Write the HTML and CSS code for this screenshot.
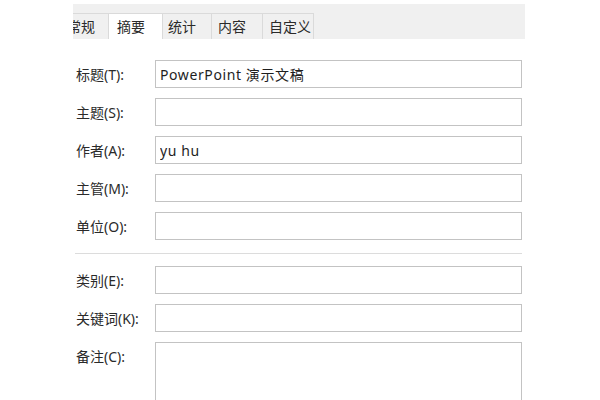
FILE: index.html
```html
<!DOCTYPE html>
<html lang="zh-CN">
<head>
<meta charset="utf-8">
<title>属性 - 摘要</title>
<link rel="stylesheet" href="styles.css">
</head>
<body>
<div class="dialog">
  <div class="tabstrip">
    <div class="tab tab-first">常规</div>
    <div class="tab tab-active">摘要</div>
    <div class="tab">统计</div>
    <div class="tab tab-w51">内容</div>
    <div class="tab tab-w52">自定义</div>
  </div>
  <div class="form">
    <div class="grid">
      <label class="lbl">标题(T):</label>
      <input class="field" type="text" value="PowerPoint 演示文稿">
      <label class="lbl">主题(S):</label>
      <input class="field" type="text" value="">
      <label class="lbl">作者(A):</label>
      <input class="field" type="text" value="yu hu">
      <label class="lbl">主管(M):</label>
      <input class="field" type="text" value="">
      <label class="lbl">单位(O):</label>
      <input class="field" type="text" value="">
    </div>
    <div class="sep"></div>
    <div class="grid grid-last">
      <label class="lbl">类别(E):</label>
      <input class="field" type="text" value="">
      <label class="lbl">关键词(K):</label>
      <input class="field" type="text" value="">
      <label class="lbl lbl-top">备注(C):</label>
      <textarea class="field area"></textarea>
    </div>
  </div>
</div>
</body>
</html>
```

FILE: styles.css
```css
html, body {
  margin: 0;
  padding: 0;
  background: #ffffff;
}

body {
  font-family: "Noto Sans", "Noto Sans CJK SC", sans-serif;
  font-size: 14px;
  color: #262626;
  overflow: hidden;
  height: 400px;
}

.dialog {
  margin-left: 73px;
  width: 452px;
  padding-top: 4px;
}

.tabstrip {
  height: 35px;
  background: #f0f0f0;
  display: flex;
  align-items: flex-end;
  overflow: hidden;
}

.tab {
  box-sizing: border-box;
  flex: 0 0 auto;
  width: 49px;
  height: 26px;
  line-height: 24px;
  padding-left: 5px;
  border-top: 1px solid #dadada;
  border-left: 1px solid #dadada;
  background: #f0f0f0;
  white-space: nowrap;
  font-family: "Noto Sans CJK SC", sans-serif;
  font-size: 14px;
  color: #2a2a2a;
}

.tab-first {
  margin-left: -12px;
}

.tab-active {
  position: relative;
  z-index: 1;
  width: 55px;
  margin-left: -2px;
  padding-left: 8px;
  background: #ffffff;
  border-right: 1px solid #dadada;
  margin-right: -1px;
}

.tab-w51 {
  width: 51px;
  padding-left: 6px;
}

.tab-w52 {
  width: 52px;
  padding-left: 6px;
  border-right: 1px solid #dadada;
}

.form {
  padding-top: 21px;
  width: 449px;
}

.grid {
  display: grid;
  grid-template-columns: 82px 367px;
  grid-auto-rows: 28px;
  row-gap: 10px;
}

.grid-last {
  grid-template-rows: 28px 28px 58px;
}

.lbl {
  align-self: center;
  padding-left: 3px;
  white-space: nowrap;
  color: #2a2a2a;
}

.lbl-top {
  align-self: start;
  padding-top: 4px;
}

.field {
  box-sizing: border-box;
  margin: 0;
  width: 367px;
  height: 28px;
  border: 1px solid #c3c3c3;
  background: #ffffff;
  padding: 0 4px;
  font-family: "Noto Sans", "Noto Sans CJK SC", sans-serif;
  font-size: 14px;
  letter-spacing: 0.6px;
  color: #1e1e1e;
  outline: none;
}

.area {
  display: block;
  height: 58px;
  border-bottom: none;
  resize: none;
}

.sep {
  height: 1px;
  background: #dcdcdc;
  margin: 13px 0 12px 2px;
  width: 447px;
}
```
